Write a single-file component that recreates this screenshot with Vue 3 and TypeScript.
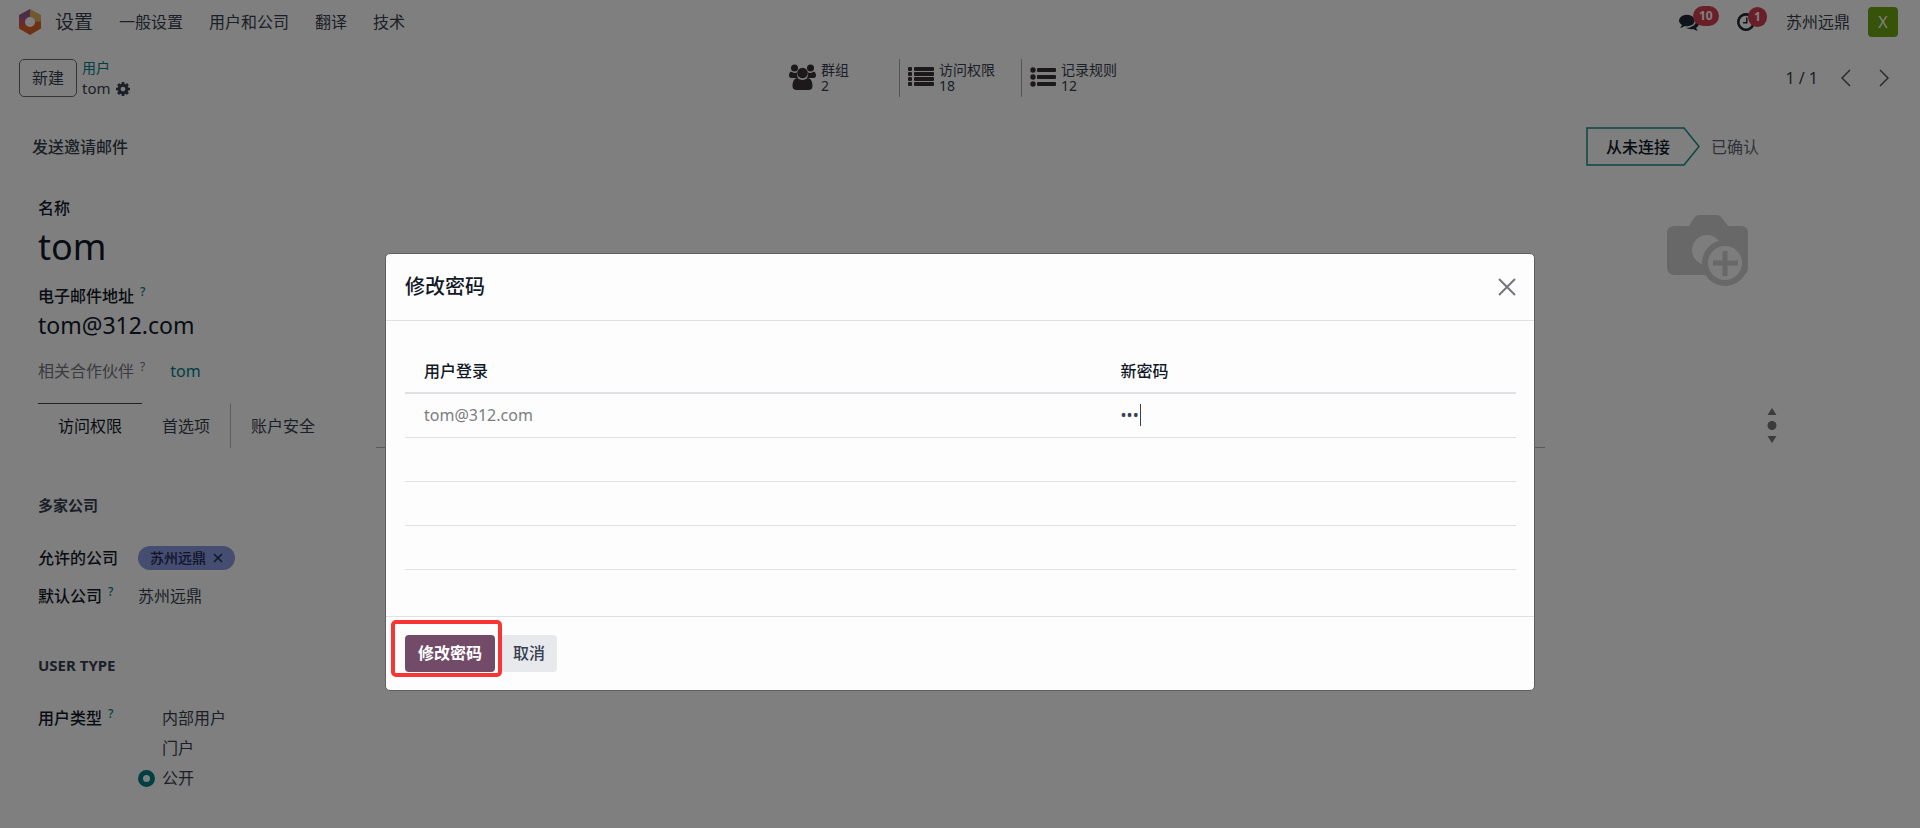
<script setup lang="ts">
import { ref } from 'vue'

interface StatLink {
  icon: 'users' | 'list' | 'bullets'
  label: string
  count: number
}

const menus: string[] = ['一般设置', '用户和公司', '翻译', '技术']
const stats: StatLink[] = [
  { icon: 'users', label: '群组', count: 2 },
  { icon: 'list', label: '访问权限', count: 18 },
  { icon: 'bullets', label: '记录规则', count: 12 },
]
const tabs: string[] = ['访问权限', '首选项', '账户安全']
const activeTab = ref('访问权限')
const userTypes: string[] = ['内部用户', '门户', '公开']
const userType = ref('公开')
const name = ref('tom')
const email = ref('tom@312.com')
const company = ref('苏州远鼎')
const password = ref('312')
const emptyRows = 3
</script>

<template>
  <div class="screen">
    <div class="page">
      <header class="navbar">
        <svg class="logo" viewBox="0 0 24 26" aria-hidden="true">
          <path d="M12 0 23 6v7l-6 0-5-5z" fill="#e0b060" />
          <path d="M12 0 1 6v7h6l5-5z" fill="#9a5a8c" />
          <path d="M1 12.500v7L12 26l11-6.500v-7h-6l-5 5-5-5z" fill="#dd6328" />
          <path d="M1 8.500v8L8 15l-1-4z" fill="#c9566c" />
          <circle cx="12" cy="13" r="5" fill="#fff" />
        </svg>
        <a class="app-name" href="#">设置</a>
        <nav class="menus">
          <a v-for="menu in menus" :key="menu" href="#">{{ menu }}</a>
        </nav>
        <div class="systray">
          <button class="tray chat" type="button" aria-label="消息">
            <svg viewBox="0 0 1792 1792" width="20" height="20"><path fill="currentColor" d="M1408 768q0 139-94 257t-256.500 186.500-353.500 68.500q-86 0-176-16-124 88-278 128-36 9-86 16h-3q-11 0-20.500-8t-11.500-21q-1-3-1-6.500t.5-6.500 2-6l2.500-5 3.500-5.500 4-5 4.500-5 4-4.500q5-6 23-25t26-29.500 22.500-29 25-38.500 20.500-44q-124-72-195-177t-71-224q0-139 94-257t256.500-186.500 353.500-68.500 353.500 68.500 256.500 186.500 94 257zm384 256q0 120-71 224.500t-195 176.500q10 24 20.500 44t25 38.500 22.500 29 26 29.500 23 25q1 1 4 4.500t4.500 5 4 5 3.500 5.500l2.500 5 2 6 .5 6.500-1 6.500q-3 14-13 22t-22 7q-50-7-86-16-154-40-278-128-90 16-176 16-271 0-472-132 58 4 88 4 161 0 309-45t264-129q125-92 192-212t67-254q0-77-23-152 129 71 204 178t75 230z" /></svg>
            <span class="badge">10</span>
          </button>
          <button class="tray clock" type="button" aria-label="活动">
            <svg viewBox="128 128 1536 1536" width="18" height="18"><path fill="currentColor" d="M1024 544v448q0 14-9 23t-23 9h-320q-14 0-23-9t-9-23v-64q0-14 9-23t23-9h224v-352q0-14 9-23t23-9h64q14 0 23 9t9 23zm416 352q0-148-73-273t-198-198-273-73-273 73-198 198-73 273 73 273 198 198 273 73 273-73 198-198 73-273zm224 0q0 209-103 385.500t-279.500 279.500-385.500 103-385.500-103-279.500-279.500-103-385.500 103-385.500 279.500-279.500 385.500-103 385.500 103 279.500 279.500 103 385.500z" /></svg>
            <span class="badge">1</span>
          </button>
          <button class="company" type="button">苏州远鼎</button>
          <button class="avatar" type="button" aria-label="用户菜单">X</button>
        </div>
      </header>

      <section class="control-panel">
        <div class="panel-side">
          <button class="new-button" type="button">新建</button>
          <div class="breadcrumb">
            <a href="#">用户</a>
            <div class="current">
              <span>tom</span>
              <button class="gear" type="button" aria-label="操作">
                <svg viewBox="128 128 1536 1536" width="14" height="14"><path fill="currentColor" d="M1152 896q0-106-75-181t-181-75-181 75-75 181 75 181 181 75 181-75 75-181zm512-109v222q0 12-8 23t-20 13l-185 28q-19 54-39 91 35 50 107 138 10 12 10 25t-9 23q-27 37-99 108t-94 71q-12 0-26-9l-138-108q-44 23-91 38-16 136-29 186-7 28-36 28h-222q-14 0-24.500-8.500t-11.500-21.500l-28-184q-49-16-90-37l-141 107q-10 9-25 9-14 0-25-11-126-114-165-168-7-10-7-23 0-12 8-23 15-21 51-66.500t54-70.500q-27-50-41-99l-183-27q-13-2-21-12.500t-8-23.500v-222q0-12 8-23t19-13l186-28q14-46 39-92-40-57-107-138-10-12-10-24 0-10 9-23 26-36 98.500-107.500t94.500-71.500q13 0 26 10l138 107q44-23 91-38 16-136 29-186 7-28 36-28h222q14 0 24.500 8.500t11.500 21.500l28 184q49 16 90 37l142-107q9-9 24-9 13 0 25 10 129 119 165 170 7 8 7 22 0 12-8 23-15 21-51 66.500t-54 70.500q26 50 41 98l183 28q13 2 21 12.500t8 23.500z" /></svg>
              </button>
            </div>
          </div>
        </div>

        <div class="stats">
          <button v-for="stat in stats" :key="stat.label" class="stat" type="button">
            <svg v-if="stat.icon === 'users'" viewBox="0 0 27 28" width="27" height="28" fill="currentColor" aria-hidden="true">
              <circle cx="5.500" cy="4" r="3.500" />
              <circle cx="21.500" cy="4" r="3.500" />
              <path d="M3 8c2 1.500 4 1.200 5.500.2C7.500 10 8 12 9 14H2.500C.8 14 0 13 0 11.500 0 9.500 1 7 3 8zM24 8c-2 1.500-4 1.200-5.500.2 1 1.800.5 3.800-.5 5.800h6.500c1.700 0 2.500-1 2.500-2.500 0-2-1-4.500-3-3.500z" />
              <circle cx="13.500" cy="9" r="5.300" />
              <path d="M8.500 14c3 2.600 7 2.600 10 0 3.500 0 5 4 5 8 0 2.500-1.500 4-4 4h-12c-2.500 0-4-1.500-4-4 0-4 1.500-8 5-8z" />
            </svg>
            <svg v-else-if="stat.icon === 'list'" viewBox="0 0 26 24" width="26" height="24" fill="currentColor" aria-hidden="true">
              <g v-for="n in 4" :key="n">
                <rect x="0" :y="(n - 1) * 5 + 1" width="4" height="4" rx="1" />
                <rect x="6" :y="(n - 1) * 5 + 1" width="20" height="4" rx="1" />
              </g>
            </svg>
            <svg v-else viewBox="0 0 26 24" width="26" height="24" fill="currentColor" aria-hidden="true">
              <g v-for="n in 3" :key="n">
                <circle cx="3" :cy="n * 7 - 3" r="2.700" />
                <rect x="7" :y="n * 7 - 5" width="19" height="4" rx="1" />
              </g>
            </svg>
            <span class="stat-text"><span>{{ stat.label }}</span><span>{{ stat.count }}</span></span>
          </button>
        </div>

        <div class="panel-side pager">
          <span>1 / 1</span>
          <button type="button" aria-label="上一条"><svg viewBox="0 0 10 18" width="10" height="18"><path d="M9 1 1 9l8 8" /></svg></button>
          <button type="button" aria-label="下一条"><svg viewBox="0 0 10 18" width="10" height="18"><path d="m1 1 8 8-8 8" /></svg></button>
        </div>
      </section>

      <section class="statusbar">
        <button class="invite" type="button">发送邀请邮件</button>
        <div class="status">
          <button class="status-current" type="button">
            <svg class="arrow" viewBox="0 0 114 39" aria-hidden="true"><path d="M1 1h97l15 18.500L98 38H1z" /></svg>
            <span>从未连接</span>
          </button>
          <button class="status-next" type="button">已确认</button>
        </div>
      </section>

      <main class="sheet">
        <div class="head">
          <div class="identity">
            <label class="label" for="name">名称</label>
            <input id="name" v-model="name" class="name" type="text" />
            <label class="label email-label" for="email">电子邮件地址 <sup>?</sup></label>
            <input id="email" v-model="email" class="email" type="text" />
            <div class="partner">
              <span>相关合作伙伴 <sup>?</sup></span>
              <a href="#">tom</a>
            </div>
          </div>
          <button class="photo" type="button" aria-label="上传图片">
            <svg viewBox="0 0 82 71" width="82" height="71">
              <path fill="#d0d0d0" d="M8 11h14l5-8q2-3 5-3h18q3 0 5 3l6 8h13q7 0 7 7v34q0 8-7 8H8q-8 0-8-8V18q0-7 8-7z" />
              <circle cx="40" cy="35" r="15" fill="#fbfbfb" />
              <circle cx="58" cy="48" r="23" fill="#d0d0d0" />
              <circle cx="58" cy="48" r="17" fill="#fbfbfb" />
              <path d="M58 36v25M46 48h25" stroke="#d0d0d0" stroke-width="5" />
            </svg>
          </button>
        </div>

        <div class="tab-row">
          <div class="tabs" role="tablist">
            <button
              v-for="tab in tabs"
              :key="tab"
              type="button"
              role="tab"
              :aria-selected="tab === activeTab"
              :class="{ active: tab === activeTab }"
              @click="activeTab = tab"
            >{{ tab }}</button>
          </div>
          <span class="tab-line"></span>
          <svg class="resizer" viewBox="0 0 10 37" width="10" height="37" aria-hidden="true">
            <path d="m5 1 4.500 7h-9zM5 36 .5 29h9z" /><circle cx="5" cy="18.500" r="4.500" />
          </svg>
        </div>

        <h2>多家公司</h2>
        <div class="field">
          <span class="label">允许的公司</span>
          <span class="tag">苏州远鼎
            <button type="button" aria-label="移除"><svg viewBox="0 0 10 10" width="10" height="10"><path d="m1 1 8 8M9 1 1 9" /></svg></button>
          </span>
        </div>
        <div class="field second">
          <label class="label" for="company">默认公司 <sup>?</sup></label>
          <input id="company" v-model="company" type="text" />
        </div>
        <h2>USER TYPE</h2>
        <div class="field types" role="radiogroup" aria-labelledby="type-label">
          <span id="type-label" class="label">用户类型 <sup>?</sup></span>
          <div>
            <label v-for="type in userTypes" :key="type" class="radio">
              <input v-model="userType" type="radio" name="user-type" :value="type" />{{ type }}
            </label>
          </div>
        </div>
      </main>
    </div>

    <div class="backdrop">
      <div class="dialog" role="dialog" aria-labelledby="dialog-title">
        <header class="dialog-head">
          <h1 id="dialog-title">修改密码</h1>
          <button type="button" aria-label="关闭"><svg viewBox="0 0 18 18" width="18" height="18"><path d="m1 1 16 16M17 1 1 17" /></svg></button>
        </header>
        <div class="dialog-body">
          <table>
            <thead>
              <tr><th class="login">用户登录</th><th id="password-head">新密码</th></tr>
            </thead>
            <tbody>
              <tr>
                <td class="login">tom@312.com</td>
                <td>
                  <div class="password">
                    <input v-model="password" type="password" aria-labelledby="password-head" />
                    <span class="caret"></span>
                  </div>
                </td>
              </tr>
              <tr v-for="row in emptyRows" :key="row"><td></td><td></td></tr>
            </tbody>
          </table>
        </div>
        <footer class="dialog-foot">
          <div class="marked">
            <button class="primary" type="button">修改密码</button>
            <span class="marker"></span>
          </div>
          <button class="secondary" type="button">取消</button>
        </footer>
      </div>
    </div>
  </div>
</template>

<style>
body {
  margin: 0;
  background: #7f7f7f;
}
</style>

<style scoped>
.screen {
  position: relative;
  min-height: 100vh;
  background: #fff;
  color: #374151;
  font: 16px/24px 'Noto Sans', 'Noto Sans CJK SC', sans-serif;
}
*,
*::before {
  box-sizing: border-box;
}
button,
input {
  margin: 0;
  padding: 0;
  border: 0;
  background: none;
  color: inherit;
  font: inherit;
  outline: none;
}
a {
  color: inherit;
  text-decoration: none;
}
svg {
  display: block;
}
sup {
  align-self: flex-start;
  color: #017e84;
  font-size: 12px;
  line-height: 16px;
}

.navbar {
  display: flex;
  align-items: center;
  height: 44px;
  padding: 0 22px 0 18px;
}
.logo {
  width: 24px;
  height: 26px;
}
.app-name {
  margin-left: 13px;
  font-size: 19px;
}
.menus {
  display: flex;
  gap: 26px;
  margin-left: 26px;
}
.systray {
  display: flex;
  align-items: center;
  margin-left: auto;
}
.tray {
  position: relative;
  color: #1f2937;
}
.chat {
  margin-right: 38px;
}
.clock {
  margin-right: 31px;
}
.badge {
  position: absolute;
  top: -6px;
  left: 14px;
  padding: 0 6px;
  border-radius: 10px;
  background: #d23f50;
  color: #fff;
  font-size: 12px;
  font-weight: 700;
  line-height: 20px;
}
.clock .badge {
  left: 11px;
}
.company {
  margin-right: 18px;
}
.avatar {
  width: 30px;
  height: 30px;
  border-radius: 4px;
  background: #6ca613;
  color: #fff;
}

.control-panel {
  display: flex;
  align-items: center;
  justify-content: space-between;
  padding: 13px 31px 0 19px;
}
.panel-side {
  display: flex;
  flex: 1;
  align-items: center;
}
.new-button {
  height: 38px;
  padding: 0 12px;
  border: 1px solid #6b6b70;
  border-radius: 5px;
}
.breadcrumb {
  margin-left: 5px;
  font-size: 15px;
  line-height: 21px;
}
.breadcrumb a {
  display: block;
  color: #017e84;
  font-size: 14px;
}
.current {
  display: flex;
  align-items: center;
  gap: 5px;
}
.stats {
  display: flex;
  margin-right: -12px;
}
.stat {
  display: flex;
  align-items: center;
  gap: 5px;
  width: 122px;
  height: 38px;
  padding-left: 8px;
  border-left: 1px solid #aaa;
  color: #3a3035;
  font-size: 14px;
  line-height: 16px;
  text-align: left;
}
.stat:first-child {
  padding-left: 11px;
  border-left-color: transparent;
}
.stat-text {
  display: flex;
  flex-direction: column;
  color: #374151;
}
.pager {
  justify-content: flex-end;
}
.pager button {
  margin-left: 28px;
}
.pager button:first-of-type {
  margin-left: 23px;
}
.pager path {
  fill: none;
  stroke: #55555a;
  stroke-width: 1.5;
}

.statusbar {
  display: flex;
  justify-content: space-between;
  margin-top: 28px;
  padding: 0 161px 0 32px;
}
.invite,
.label {
  font-weight: 500;
}
.status {
  display: flex;
  gap: 11px;
}
.status-current {
  position: relative;
  width: 114px;
  height: 39px;
  padding-right: 10px;
  color: #111827;
  font-weight: 500;
}
.arrow {
  position: absolute;
  inset: 0;
  width: 100%;
  height: 100%;
  fill: none;
  stroke: #1a8a8a;
  stroke-width: 1.5;
}
.status-next {
  color: #5f6570;
}

.sheet {
  padding: 30px 0 34px 38px;
}
.head {
  display: flex;
  justify-content: space-between;
  padding-right: 171px;
}
.identity {
  display: flex;
  flex-direction: column;
}
.label {
  display: flex;
  gap: 6px;
  color: #111827;
}
.name {
  height: 48px;
  margin-top: 2px;
  color: #111827;
  font-size: 36px;
}
.email-label {
  margin-top: 14px;
}
.email {
  height: 32px;
  margin-top: 1px;
  color: #111827;
  font-size: 23px;
}
.partner {
  display: flex;
  gap: 25px;
  margin-top: 18px;
  color: #74777e;
}
.partner > span {
  display: flex;
  gap: 6px;
}
.partner sup {
  color: #74777e;
}
.partner a {
  color: #017e84;
}
.photo {
  align-self: flex-start;
  margin-top: 19px;
}
.tab-row {
  display: flex;
  align-items: flex-end;
  margin-top: 20px;
  padding-right: 143px;
}
.tabs {
  display: flex;
}
.tabs button {
  height: 45px;
  padding: 0 20px 1px;
  border-top: 1px solid transparent;
}
.tabs button + button + button {
  border-left: 1px solid #bbb;
}
.tabs .active {
  border-top-color: #4b4b52;
  color: #111827;
}
.tab-line {
  flex: 1;
  height: 1px;
  margin: 0 222px 0 41px;
  background: #b5b5b8;
}
.resizer {
  margin-bottom: 4px;
  fill: #77777a;
}
h2 {
  margin: 45px 0 29px;
  font-size: 15px;
  font-weight: 700;
  line-height: 24px;
}
.field {
  display: grid;
  grid-template-columns: 100px 1fr;
  align-items: center;
}
.second {
  margin-top: 14px;
}
.types {
  align-items: start;
}
.tag {
  display: flex;
  align-items: center;
  gap: 7px;
  width: fit-content;
  padding: 0 12px;
  border-radius: 12px;
  background: #8a9ae0;
  color: #1f2a5a;
  font-size: 14px;
  font-weight: 500;
}
.tag path {
  stroke: currentColor;
  stroke-width: 1.5;
}
.radio {
  display: flex;
  align-items: center;
  gap: 7px;
  height: 30px;
}
.radio:first-child {
  margin-top: -3px;
}
.radio input {
  appearance: none;
  width: 17px;
  height: 17px;
  border: 5px solid transparent;
  border-radius: 50%;
}
.radio input:checked {
  border-color: #017e84;
}

.backdrop {
  position: absolute;
  inset: 0;
  display: flex;
  align-items: flex-start;
  justify-content: center;
  padding: 253px 32px 32px;
  background: rgba(0, 0, 0, 0.5);
}
.dialog {
  width: 100%;
  max-width: 1150px;
  border: 1px solid #5f5f62;
  border-radius: 5px;
  background: #fdfdfd;
  color: #374151;
}
.dialog-head {
  display: flex;
  align-items: center;
  justify-content: space-between;
  height: 67px;
  padding: 0 18px 0 19px;
  border-bottom: 1px solid #dfe1e4;
}
.dialog-head h1 {
  margin: 0;
  color: #111827;
  font-size: 20px;
  font-weight: 500;
  line-height: 28px;
}
.dialog-head path {
  stroke: #74767a;
  stroke-width: 2;
}
.dialog-body {
  padding: 28px 18px 46px 19px;
}
table {
  width: 100%;
  border-collapse: collapse;
  table-layout: fixed;
}
th,
td {
  height: 44px;
  padding: 0 19px;
  border-bottom: 1px solid #dfe1e4;
  text-align: left;
}
th {
  border-bottom: 2px solid #dfe1e4;
  color: #111827;
  font-weight: 500;
}
th.login {
  width: 62.7%;
}
td.login {
  color: #7b7d82;
}
.password {
  position: relative;
}
.password input {
  display: block;
  width: 100%;
  height: 24px;
}
.caret {
  position: absolute;
  top: 1px;
  left: 19px;
  width: 1px;
  height: 22px;
  background: #374151;
}
.dialog-foot {
  display: flex;
  align-items: center;
  gap: 6px;
  padding: 18px 19px;
  border-top: 1px solid #dfe1e4;
}
.marked {
  position: relative;
}
.marker {
  position: absolute;
  inset: -15px -7px -5px -14px;
  border: 4px solid #f83535;
  border-radius: 5px;
  pointer-events: none;
}
.dialog-foot button {
  height: 37px;
  padding: 0 12px;
  border-radius: 4px;
}
.dialog-foot .primary {
  padding: 0 13px;
  background: #714b67;
  color: #fff;
  font-weight: 700;
}
.secondary {
  background: #e7e9ed;
  font-weight: 500;
}
</style>
